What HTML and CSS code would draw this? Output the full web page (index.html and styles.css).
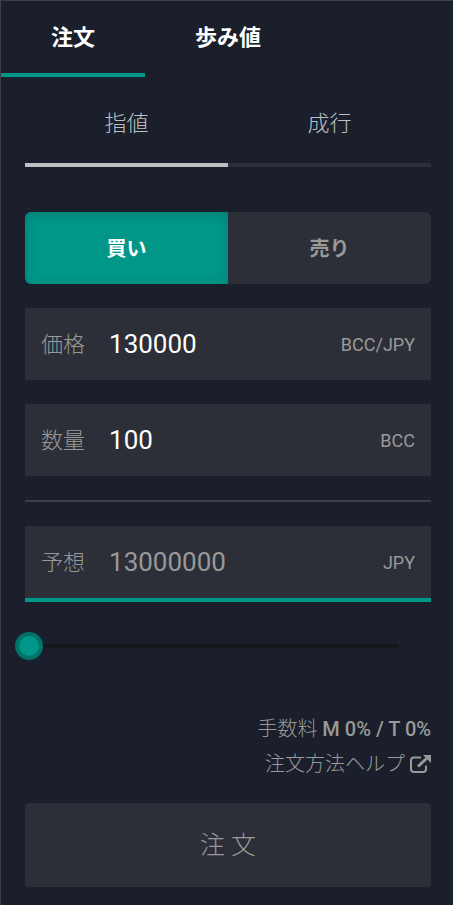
FILE: index.html
```html
<!DOCTYPE html>
<html lang="ja">
<head>
    <meta charset="UTF-8">
    <meta name="viewport" content="width=device-width, initial-scale=1.0">
    <title>注文</title>
    <link rel="stylesheet" href="styles.css">
</head>
<body>
    <div class="panel">
        <nav class="tabs">
            <button class="tab active" type="button">注文</button>
            <button class="tab" type="button">歩み値</button>
        </nav>
        <form class="order">
            <div class="types">
                <button class="type active" type="button">指値</button>
                <button class="type" type="button">成行</button>
            </div>
            <div class="sides">
                <button class="side buy" type="button">買い</button>
                <button class="side sell" type="button">売り</button>
            </div>
            <div class="field">
                <label for="price">価格</label>
                <input id="price" type="text" value="130000">
                <span class="unit">BCC/JPY</span>
            </div>
            <div class="field">
                <label for="amount">数量</label>
                <input id="amount" type="text" value="100">
                <span class="unit">BCC</span>
            </div>
            <hr class="divider">
            <div class="field estimate">
                <label for="total">予想</label>
                <input id="total" type="text" value="13000000" readonly>
                <span class="unit">JPY</span>
            </div>
            <input class="slider" type="range" min="0" max="100" value="0" aria-label="数量">
            <div class="info">
                <div>手数料 <span class="rate">M 0% / T 0%</span></div>
                <a class="help" href="#">注文方法ヘルプ
                    <svg class="icon" viewBox="0 0 22 20" aria-hidden="true">
                        <path d="M12 2.500H5Q2 2.500 2 5.500V14Q2 17 5 17H14Q17 17 17 14V10.500" fill="none" stroke="currentColor" stroke-width="2"/>
                        <path d="M9 11.500L17.500 3.500" fill="none" stroke="currentColor" stroke-width="3"/>
                        <path d="M14 0H22V8Z" fill="currentColor"/>
                    </svg>
                </a>
            </div>
            <button class="submit" type="submit">注 文</button>
        </form>
    </div>
</body>
</html>
```

FILE: styles.css
```css
* {
    box-sizing: border-box;
}
body {
    margin: 0;
    background-color: #1a1f2b;
    color: #999;
    font-family: Roboto, "Noto Sans CJK JP", sans-serif;
    font-size: 22px;
    font-weight: 300;
}
button, input {
    font: inherit;
    color: inherit;
    border: none;
    background: none;
    padding: 0;
    margin: 0;
}
button {
    cursor: pointer;
}
.panel {
    min-height: 100vh;
    border-top: 1px solid #3b3f48;
    border-left: 1px solid #3b3f48;
}
.tabs {
    display: flex;
}
.tab {
    height: 76px;
    padding: 0 50px 4px;
    border-bottom: 4px solid transparent;
    color: #fff;
    font-weight: 700;
}
.tab.active {
    border-bottom-color: #009688;
}
.order {
    display: flex;
    flex-direction: column;
    padding: 4px 22px 18px 24px;
}
.types, .sides {
    display: flex;
}
.type {
    flex: 1;
    height: 86px;
    padding-bottom: 2px;
    border-bottom: 4px solid #2c2f37;
    color: #bdc1c4;
}
.type.active {
    border-bottom-color: #bdc1c4;
}
.sides {
    margin: 45px 0 24px;
    border-radius: 6px;
    overflow: hidden;
}
.side {
    flex: 1;
    height: 72px;
    padding-bottom: 2px;
    font-size: 20px;
    font-weight: 700;
}
.buy {
    background-color: #009688;
    color: #fff;
    box-shadow: inset 0 3px 12px rgba(0, 0, 0, 0.15);
}
.sell {
    background-color: #2c2f37;
}
.field {
    display: flex;
    align-items: center;
    gap: 24px;
    height: 72px;
    margin-bottom: 24px;
    padding: 0 16px;
    background-color: #2c2f37;
}
.field label {
    padding-bottom: 4px;
}
.field input {
    flex: 1;
    min-width: 0;
    color: #fff;
    font-size: 26px;
    font-weight: 400;
}
.unit {
    font-size: 18px;
    font-weight: 400;
}
.divider {
    width: 100%;
    height: 2px;
    margin: 0 0 24px;
    border: none;
    background-color: #3b3f48;
}
.estimate {
    height: 76px;
    margin-bottom: 30px;
    border-bottom: 4px solid #009688;
}
.field.estimate input {
    color: #999;
}

/* slider */
.slider {
    appearance: none;
    width: calc(100% - 22px);
    height: 28px;
    margin-left: -10px;
}
.slider::-webkit-slider-runnable-track {
    height: 4px;
    background-color: #14171e;
}
.slider::-webkit-slider-thumb {
    appearance: none;
    width: 28px;
    height: 28px;
    margin-top: -12px;
    border: 4px solid #007368;
    border-radius: 50%;
    background-color: #009688;
}

.info {
    margin: 52px 0 21px;
    font-size: 20px;
    line-height: 35px;
    text-align: right;
}
.rate {
    font-weight: 500;
}
.help {
    display: flex;
    justify-content: flex-end;
    align-items: center;
    gap: 4px;
    color: inherit;
    text-decoration: none;
}
.icon {
    width: 22px;
    height: 20px;
}
.submit {
    height: 84px;
    padding-bottom: 4px;
    border-radius: 4px;
    background-color: #2c2f37;
    font-size: 25px;
}
```
